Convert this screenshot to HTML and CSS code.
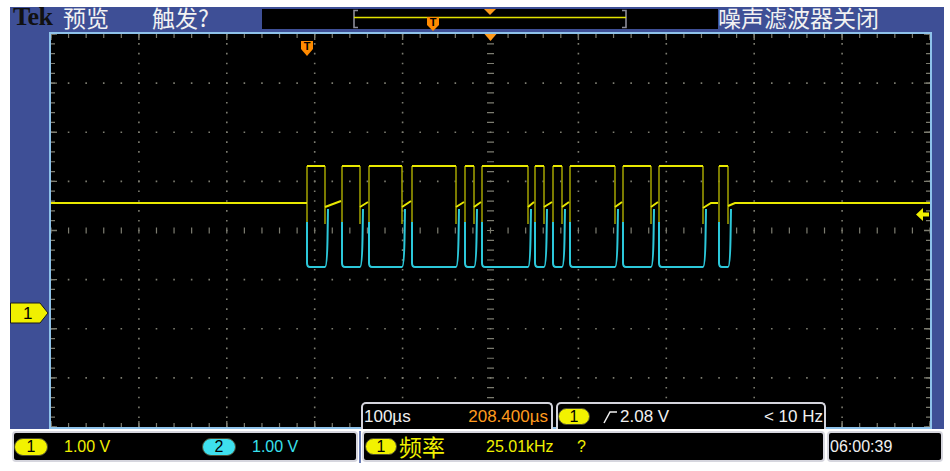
FILE: index.html
```html
<!DOCTYPE html>
<html lang="zh">
<head>
<meta charset="utf-8">
<title>Tek 预览</title>
<link rel="stylesheet" href="styles.css">
</head>
<body>
<div class="scope">
  <div class="topbar">
    <span class="tek">Tek</span>
    <span class="cjk preview">预览</span>
    <span class="cjk trig">触发?</span>
    <div class="record">
      <svg width="456" height="20" viewBox="0 0 456 20" class="over">
        <path d="M96,1.5 H92 V18.5 H96" fill="none" stroke="#8c8c98" stroke-width="1.6"/>
        <path d="M360,1.5 H364 V18.5 H360" fill="none" stroke="#8c8c98" stroke-width="1.6"/>
        <path d="M92,8.5 H364" stroke="#e2e200" stroke-width="1.6"/>
        <polygon points="222,0 234,0 228,6" fill="#ff9a1a"/>
        <path d="M165,8 H177 V16 L171,22 L165,16 Z" fill="#ff8a00"/>
        <text x="171" y="17" class="tmark">T</text>
      </svg>
    </div>
    <span class="cjk filter">噪声滤波器关闭</span>
  </div>

  <div class="mid">
    <div class="lcol"></div>
    <div class="grat">
      <svg width="879" height="393" viewBox="0 0 879 393" class="plot">
        <g class="dotv">
          <line x1="87.9" y1="0" x2="87.9" y2="393"/>
          <line x1="175.8" y1="0" x2="175.8" y2="393"/>
          <line x1="263.7" y1="0" x2="263.7" y2="393"/>
          <line x1="351.6" y1="0" x2="351.6" y2="393"/>
          <line x1="527.4" y1="0" x2="527.4" y2="393"/>
          <line x1="615.3" y1="0" x2="615.3" y2="393"/>
          <line x1="703.2" y1="0" x2="703.2" y2="393"/>
          <line x1="791.1" y1="0" x2="791.1" y2="393"/>
        </g>
        <g class="doth">
          <line x1="0" y1="49.125" x2="879" y2="49.125"/>
          <line x1="0" y1="98.25" x2="879" y2="98.25"/>
          <line x1="0" y1="147.375" x2="879" y2="147.375"/>
          <line x1="0" y1="245.625" x2="879" y2="245.625"/>
          <line x1="0" y1="294.75" x2="879" y2="294.75"/>
          <line x1="0" y1="343.875" x2="879" y2="343.875"/>
        </g>
        <line class="ticky" x1="439.5" y1="0" x2="439.5" y2="393" stroke-width="7"/>
        <line class="tickx" x1="0" y1="196.5" x2="879" y2="196.5" stroke-width="6"/>
        <line class="ticky" x1="2" y1="0" x2="2" y2="393" stroke-width="4"/>
        <line class="ticky" x1="877" y1="0" x2="877" y2="393" stroke-width="4"/>
        <line class="tickx" x1="0" y1="2" x2="879" y2="2" stroke-width="4"/>
        <line class="tickx" x1="0" y1="391" x2="879" y2="391" stroke-width="4"/>
        <line class="majy" x1="3" y1="0" x2="3" y2="393" stroke-width="6"/>
        <line class="majy" x1="876" y1="0" x2="876" y2="393" stroke-width="6"/>
        <line class="majx" x1="0" y1="3" x2="879" y2="3" stroke-width="6"/>
        <line class="majx" x1="0" y1="390" x2="879" y2="390" stroke-width="6"/>

        <path class="edge" d="M256,132 V190 M274,132 V190 M291,132 V190 M309,132 V190 M318,132 V190 M351,132 V190 M361,132 V190 M405,132 V190 M414,132 V190 M423,132 V190 M431,132 V190 M477,132 V190 M484,132 V190 M493,132 V190 M502,132 V190 M511,132 V190 M519,132 V190 M564,132 V190 M572,132 V190 M600,132 V190 M608,132 V190 M652,132 V190 M668,132 V190 M677,132 V190"/>
        <path class="cyan" d="M256,188 V229 Q256,233 259,233 H274 Q276,233 276.5,205 L277,175
          M291,188 V229 Q291,233 294,233 H309 Q311,233 311.5,205 L312,175
          M318,188 V229 Q318,233 321,233 H351 Q353,233 353.5,205 L354,175
          M361,188 V229 Q361,233 364,233 H405 Q407,233 407.5,205 L408,175
          M414,188 V229 Q414,233 417,233 H423 Q425,233 425.5,205 L426,175
          M431,188 V229 Q431,233 434,233 H477 Q479,233 479.5,205 L480,175
          M484,188 V229 Q484,233 487,233 H493 Q495,233 495.5,205 L496,175
          M502,188 V229 Q502,233 505,233 H511 Q513,233 513.5,205 L514,175
          M519,188 V229 Q519,233 522,233 H564 Q566,233 566.5,205 L567,175
          M572,188 V229 Q572,233 575,233 H600 Q602,233 602.5,205 L603,175
          M608,188 V229 Q608,233 611,233 H652 Q654,233 654.5,205 L655,175
          M668,188 V229 Q668,233 671,233 H677 Q679,233 679.5,205 L680,175"/>
        <path class="yellow" d="M0,169 H256 M256,132 H274 M274,173 L290,167 M291,132 H309 M309,173 L317,168 M318,132 H351 M351,173 L360,167 M361,132 H405 M405,173 L413,168 M414,132 H423 M423,173 L430,168 M431,132 H477 M477,173 L483,168 M484,132 H493 M493,173 L501,168 M502,132 H511 M511,173 L518,168 M519,132 H564 M564,173 L571,168 M572,132 H600 M600,173 L607,168 M608,132 H652 M652,174 L660,169 H667 M668,132 H677 M677,172 L684,169 H879"/>

        <polygon points="433.5,0 445.5,0 439.5,7" fill="#ff9a1a"/>
        <path d="M250,7 H262 V15 L256,22 L250,15 Z" fill="#ff8a00"/>
        <text x="256" y="16" class="tmark">T</text>
        <path d="M865,180.5 L872,174 V178.5 H878 V182.5 H872 V187 Z" fill="#f0f000"/>
      </svg>

      <div class="tbox">
        <span class="wt">100µs</span>
        <span class="or">208.400µs</span>
      </div>
      <div class="trbox">
        <span class="badge yb">1</span>
        <svg class="slope" width="15" height="14" viewBox="0 0 15 14"><polyline points="1,13 7,2 14,2" fill="none" stroke="#f0f0f0" stroke-width="1.5"/></svg>
        <span class="wt lvl">2.08 V</span>
        <span class="wt hz">&lt; 10 Hz</span>
      </div>
    </div>
    <div class="rcol"></div>
    <svg class="ch1mark" width="40" height="22" viewBox="0 0 40 22">
      <path d="M0.5,1 H30 L38,11 L30,21 H0.5 Z" fill="#f0f000" stroke="#1a1a1a" stroke-width="1"/>
      <text x="13" y="17" class="mk">1</text>
    </svg>
  </div>

  <div class="bottom">
    <div class="box chbox">
      <div class="ch"><span class="badge yb">1</span><span class="val yl">1.00 V</span></div>
      <div class="ch"><span class="badge cb">2</span><span class="val cy">1.00 V</span></div>
    </div>
    <div class="sep"></div>
    <div class="box measbox">
      <span class="badge yb mb">1</span>
      <span class="cjk yl freqlbl">频率</span>
      <span class="yl freq">25.01kHz</span>
      <span class="yl">?</span>
    </div>
    <div class="gap2"></div>
    <div class="box clock"><span class="wt">06:00:39</span></div>
  </div>
</div>
</body>
</html>
```
FILE: styles.css
```css
body {
  margin: 0;
  background: #ffffff;
  font-family: "Liberation Sans", Arial, sans-serif;
}

.scope {
  margin: 7px 0 0 10px;
  width: 934px;
}

.topbar {
  height: 25px;
  background: #3e4f96;
  display: flex;
  align-items: flex-start;
  color: #f2f2f2;
}

.tek {
  flex: none;
  width: 43px;
  margin-left: 3px;
  font-family: "Liberation Serif", serif;
  font-weight: bold;
  font-size: 26px;
  line-height: 19px;
  color: #111111;
  letter-spacing: -0.5px;
}

.cjk {
  font-family: "Noto Sans CJK SC", sans-serif;
  font-size: 23px;
  line-height: 21px;
}

.preview {
  flex: none;
  width: 46px;
  margin-left: 7px;
}

.trig {
  flex: none;
  width: 60px;
  margin-left: 43px;
}

.record {
  flex: none;
  width: 456px;
  height: 20px;
  margin: 2px 0 0 50px;
  background: #000000;
}

.over {
  display: block;
  overflow: visible;
}

.filter {
  flex: none;
  white-space: nowrap;
}

.tmark {
  font-family: "Liberation Sans", Arial, sans-serif;
  font-weight: bold;
  font-size: 11px;
  fill: #000000;
  text-anchor: middle;
}

.mid {
  display: flex;
  height: 397px;
  position: relative;
}

.lcol {
  width: 39px;
  background: #3e4f96;
}

.rcol {
  width: 12px;
  background: #3e4f96;
}

.grat {
  width: 879px;
  height: 393px;
  border: 2px solid #8ec2ea;
  background: #000000;
  position: relative;
}

.plot {
  display: block;
}

.dotv line {
  stroke: #7c7c70;
  stroke-width: 1.6;
  stroke-dasharray: 1.6 8.225;
  stroke-dashoffset: 0.8;
}

.doth line {
  stroke: #7c7c70;
  stroke-width: 1.6;
  stroke-dasharray: 1.6 15.98;
  stroke-dashoffset: 0.8;
}

.ticky {
  stroke: #7c7c70;
  stroke-dasharray: 1.2 8.625;
  stroke-dashoffset: 0.6;
}

.tickx {
  stroke: #7c7c70;
  stroke-dasharray: 1.2 16.38;
  stroke-dashoffset: 0.6;
}

.majy {
  stroke: #7c7c70;
  stroke-dasharray: 1.4 47.725;
  stroke-dashoffset: 0.7;
}

.majx {
  stroke: #7c7c70;
  stroke-dasharray: 1.4 86.5;
  stroke-dashoffset: 0.7;
}

.edge {
  fill: none;
  stroke: #9a9a00;
  stroke-width: 1.6;
}

.cyan {
  fill: none;
  stroke: #2cc8da;
  stroke-width: 2;
}

.yellow {
  fill: none;
  stroke: #e8e800;
  stroke-width: 2;
}

.ch1mark {
  position: absolute;
  left: 0;
  top: 270px;
}

.mk {
  font-family: "Liberation Sans", Arial, sans-serif;
  font-size: 17px;
  fill: #000000;
}

.tbox,
.trbox {
  position: absolute;
  bottom: -2px;
  height: 27px;
  box-sizing: border-box;
  background: #000000;
  border: 2px solid #d4d4dc;
  border-bottom: none;
  border-radius: 5px 5px 0 0;
  display: flex;
  align-items: center;
  font-size: 17px;
}

.tbox {
  left: 310px;
  width: 192px;
  justify-content: space-between;
  padding: 0 3px 0 1px;
}

.trbox {
  left: 505px;
  width: 270px;
  padding: 0 1px 0 0;
}

.wt {
  color: #f0f0f0;
}

.or {
  color: #ff9b1e;
}

.yl {
  color: #f0f000;
}

.cy {
  color: #38e0ee;
}

.badge {
  flex: none;
  width: 32px;
  height: 17px;
  box-sizing: border-box;
  border: 1px solid #4a4a30;
  border-radius: 9px;
  color: #000000;
  font-size: 16px;
  display: flex;
  align-items: center;
  justify-content: center;
}

.yb {
  background: #f2f200;
}

.cb {
  background: #3ee0ee;
}

.slope {
  flex: none;
  margin-left: 13px;
}

.lvl {
  margin-left: 2px;
}

.hz {
  margin-left: auto;
}

.bottom {
  display: flex;
  height: 34px;
  padding-top: 2px;
  box-sizing: border-box;
}

.box {
  flex: none;
  height: 31px;
  box-sizing: border-box;
  background: #000000;
  border: 2px solid #d6d6de;
  border-radius: 4px;
  display: flex;
  align-items: center;
  font-size: 16px;
}

.chbox {
  margin-left: 2px;
  width: 346px;
}

.ch {
  flex: none;
  width: 188px;
  display: flex;
  align-items: center;
}

.ch .badge {
  width: 34px;
  height: 18px;
}

.val {
  margin-left: 16px;
}

.sep {
  flex: none;
  width: 4px;
  background: linear-gradient(to right, transparent 1px, #6a7cb4 1px, #6a7cb4 3px, transparent 3px);
}

.measbox {
  width: 463px;
}

.mb {
  margin-left: 1px;
}

.freqlbl {
  flex: none;
  width: 46px;
  margin-left: 2px;
}

.freq {
  flex: none;
  width: 91px;
  margin-left: 41px;
}

.gap2 {
  flex: none;
  width: 2px;
}

.clock {
  width: 116px;
  padding-left: 1px;
}
```
